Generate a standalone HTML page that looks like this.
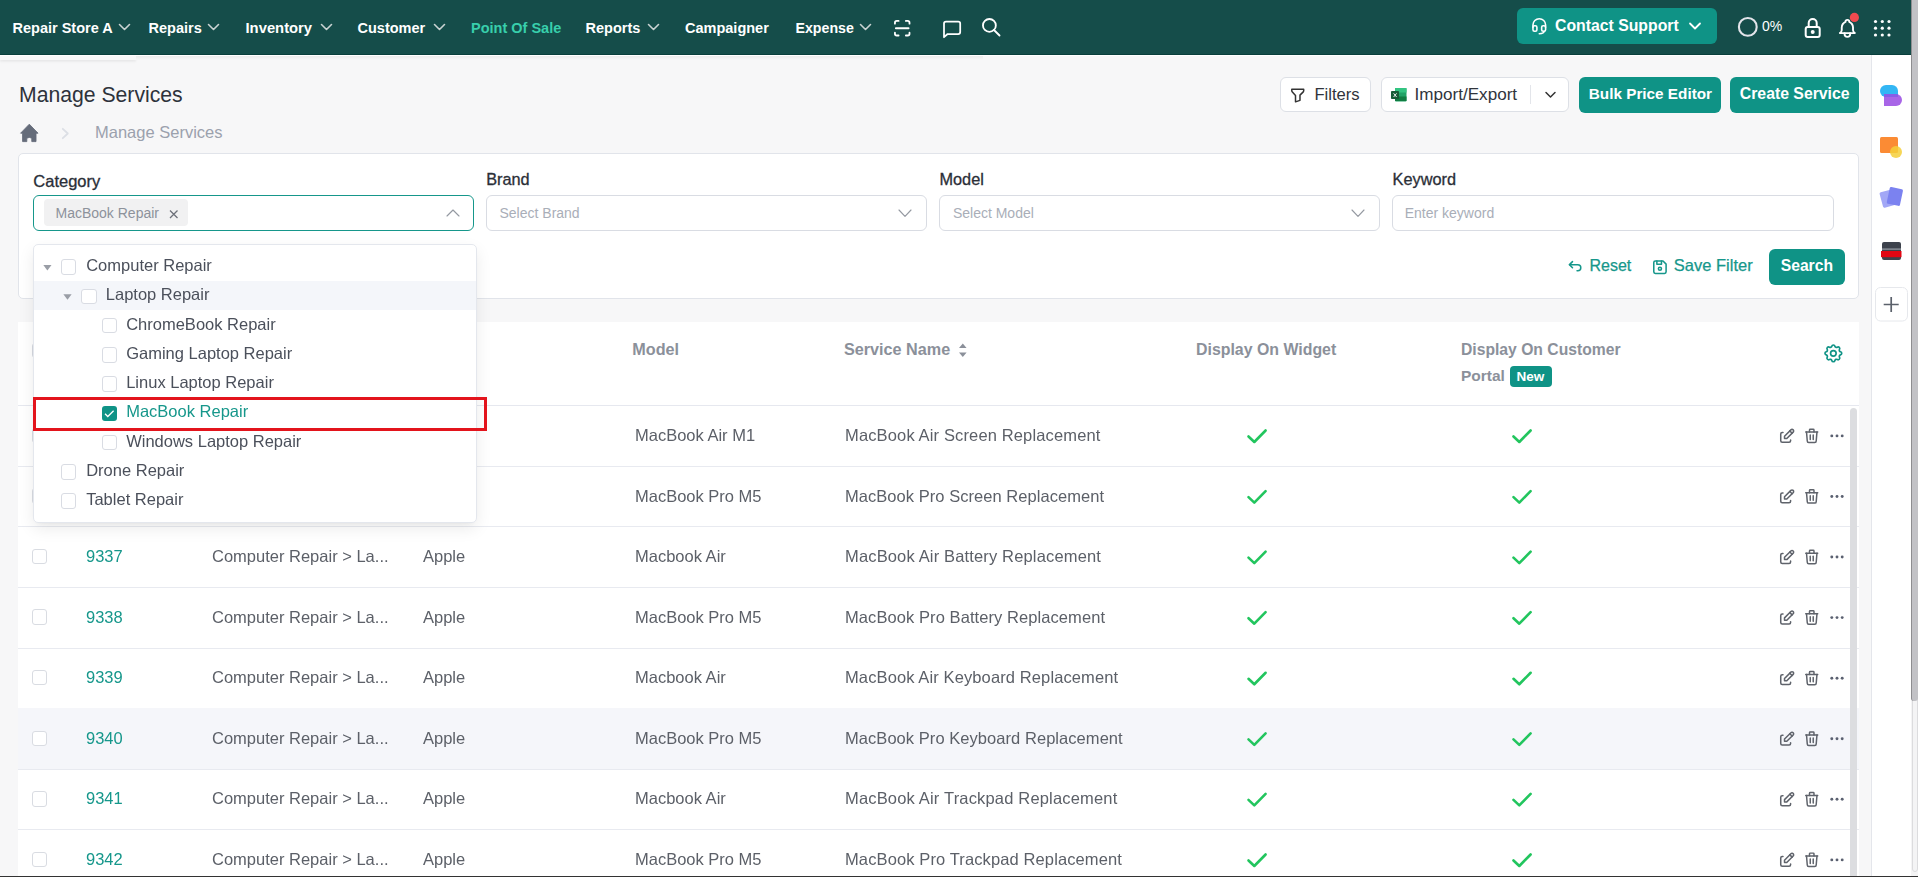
<!DOCTYPE html>
<html><head><meta charset="utf-8">
<style>
*{box-sizing:border-box;margin:0;padding:0}
html,body{width:1918px;height:877px;overflow:hidden;background:#f7f7f8;font-family:"Liberation Sans",sans-serif;-webkit-font-smoothing:antialiased}
.a{position:absolute}
.t{position:absolute;white-space:nowrap;line-height:1}
svg{position:absolute;overflow:visible}
#nav{position:absolute;left:0;top:0;width:1911px;height:55px;background:#154d4a;border-bottom:1px solid #093f3c}
.nv{color:#fff;font-weight:700;font-size:14.5px}
.th{font-size:16.2px;font-weight:700;color:#8b909a}
.td{font-size:16.5px;color:#5c6068;will-change:transform}
</style></head><body>
<!-- NAV -->
<div id="nav"></div>
<div class="t nv" style="left:12.5px;top:20.8px">Repair Store A</div>
<div class="t nv" style="left:148.5px;top:20.8px">Repairs</div>
<div class="t nv" style="left:245.5px;top:20.8px;font-size:14.8px">Inventory</div>
<div class="t nv" style="left:357.5px;top:20.8px">Customer</div>
<div class="t nv" style="left:471px;top:20.8px;color:#38cfac">Point Of Sale</div>
<div class="t nv" style="left:585.5px;top:20.8px">Reports</div>
<div class="t nv" style="left:685px;top:20.8px">Campaigner</div>
<div class="t nv" style="left:795.5px;top:20.8px;font-size:14.2px">Expense</div>
<svg style="left:0;top:0" width="1918" height="55">
 <g fill="none" stroke="#c9d3d2" stroke-width="1.6" stroke-linecap="round" stroke-linejoin="round">
  <path d="M119.5 24.5 L124.5 29.5 L129.5 24.5"/>
  <path d="M208.5 24.5 L213.5 29.5 L218.5 24.5"/>
  <path d="M321.5 24.5 L326.5 29.5 L331.5 24.5"/>
  <path d="M434.5 24.5 L439.5 29.5 L444.5 24.5"/>
  <path d="M648.5 24.5 L653.5 29.5 L658.5 24.5"/>
  <path d="M860.5 24.5 L865.5 29.5 L870.5 24.5"/>
 </g>
 <g fill="none" stroke="#fff" stroke-width="1.6" stroke-linecap="round" stroke-linejoin="round">
 </g>
<g transform="translate(891.30 17.30) scale(0.91)" fill="none" stroke="#fff" stroke-width="2" stroke-linecap="round" stroke-linejoin="round"><path d="M4 7v-1a2 2 0 0 1 2 -2h2"/><path d="M4 17v1a2 2 0 0 0 2 2h2"/><path d="M16 4h2a2 2 0 0 1 2 2v1"/><path d="M16 20h2a2 2 0 0 0 2 -2v-1"/><path d="M5 12l14 0"/></g>
 <g fill="none" stroke="#fff" stroke-width="1.6" stroke-linecap="round" stroke-linejoin="round">
  <!-- chat -->
  <path d="M944 37.2 V23.6 a2 2 0 0 1 2 -2 H958.2 a2 2 0 0 1 2 2 V32 a2 2 0 0 1 -2 2 H947.6 Z" stroke-width="1.75"/>
 </g>
<g transform="translate(980.20 16.20) scale(0.92)" fill="none" stroke="#fff" stroke-width="2" stroke-linecap="round" stroke-linejoin="round" ><path d="M10 10m-7 0a7 7 0 1 0 14 0a7 7 0 1 0 -14 0"/><path d="M21 21l-6 -6"/></g>
</svg>
<!-- contact support -->
<div class="a" style="left:1517px;top:8px;width:200px;height:36px;background:#0f9386;border-radius:6px"></div>
<svg style="left:1517px;top:8px" width="200" height="36">
 <g transform="translate(12.80 8.30) scale(0.79)" fill="none" stroke="#fff" stroke-width="2" stroke-linecap="round" stroke-linejoin="round"><path d="M4 14v-3a8 8 0 1 1 16 0v3"/><path d="M18 19c0 1.657 -2.686 3 -6 3"/><path d="M4 14a2 2 0 0 1 2 -2h1a2 2 0 0 1 2 2v3a2 2 0 0 1 -2 2h-1a2 2 0 0 1 -2 -2v-3z"/><path d="M15 14a2 2 0 0 1 2 -2h1a2 2 0 0 1 2 2v3a2 2 0 0 1 -2 2h-1a2 2 0 0 1 -2 -2v-3z"/></g>
 <path d="M173 15.5 L178 20.5 L183 15.5" fill="none" stroke="#fff" stroke-width="1.8" stroke-linecap="round" stroke-linejoin="round"/>
</svg>
<div class="t" style="left:1555px;top:18px;color:#fff;font-weight:700;font-size:15.8px">Contact Support</div>
<svg style="left:0;top:0" width="1918" height="55">
 <circle cx="1747.8" cy="26.9" r="8.9" fill="none" stroke="#e3e4ea" stroke-width="2.1"/>
<g transform="translate(1800.70 16.00) scale(1.0)" fill="none" stroke="#fff" stroke-width="2" stroke-linecap="round" stroke-linejoin="round"><path d="M5 13a2 2 0 0 1 2 -2h10a2 2 0 0 1 2 2v6a2 2 0 0 1 -2 2h-10a2 2 0 0 1 -2 -2v-6z"/><path d="M11 16a1 1 0 1 0 2 0a1 1 0 0 0 -2 0"/><path d="M8 11v-4a4 4 0 1 1 8 0v4"/></g><g transform="translate(1836.10 17.10) scale(0.94)" fill="none" stroke="#fff" stroke-width="2" stroke-linecap="round" stroke-linejoin="round"><path d="M10 5a2 2 0 1 1 4 0a7 7 0 0 1 4 6v3a4 4 0 0 0 2 3h-16a4 4 0 0 0 2 -3v-3a7 7 0 0 1 4 -6"/><path d="M9 17v1a3 3 0 0 0 6 0v-1"/></g>
 <circle cx="1854.4" cy="17.4" r="4.6" fill="#f04a4f"/>
 <g fill="#fff">
  <circle cx="1875.5" cy="21.5" r="1.6"/><circle cx="1882.3" cy="21.5" r="1.6"/><circle cx="1889" cy="21.5" r="1.6"/>
  <circle cx="1875.5" cy="28.2" r="1.6"/><circle cx="1882.3" cy="28.2" r="1.6"/><circle cx="1889" cy="28.2" r="1.6"/>
  <circle cx="1875.5" cy="35" r="1.6"/><circle cx="1882.3" cy="35" r="1.6"/><circle cx="1889" cy="35" r="1.6"/>
 </g>
</svg>
<div class="t" style="left:1762px;top:19px;color:#fff;font-size:14px">0%</div>

<!-- PAGE HEADER -->
<div class="a" style="left:0;top:55px;width:1911px;height:1px;background:#fff"></div>
<div class="a" style="left:0;top:56px;width:136px;height:4px;background:#f8f8f9;box-shadow:0 1.5px 2.5px rgba(0,0,0,0.07)"></div>
<div class="a" style="left:136px;top:56px;width:847px;height:4px;background:linear-gradient(#ebebeb,#f7f7f8)"></div>
<div class="t" style="left:19px;top:84.2px;font-size:21.2px;color:#2e323b">Manage Services</div>
<svg style="left:0;top:0" width="300" height="150">
 <path d="M29.3 124.2 L20.6 133.2 H22.6 V141.6 H26.8 V138.2 Q29.3 136.6 31.8 138.2 V141.6 H36 V133.2 H38 Z" fill="#656c7a" stroke="#656c7a" stroke-width="0.9" stroke-linejoin="round"/>
 <path d="M62.8 128.8 L67.8 133.5 L62.8 138.2" fill="none" stroke="#dcdfe5" stroke-width="1.8" stroke-linecap="round" stroke-linejoin="round"/>
</svg>
<div class="t" style="left:95px;top:124.2px;font-size:16.5px;color:#9ba1ad">Manage Services</div>

<!-- top buttons -->
<div class="a" style="left:1280px;top:77px;width:90.8px;height:35px;background:#fff;border:1px solid #dde0e6;border-radius:6px"></div>
<div class="a" style="left:1380.5px;top:77px;width:188.5px;height:35px;background:#fff;border:1px solid #dde0e6;border-radius:6px"></div>
<div class="a" style="left:1530px;top:85px;width:1px;height:19px;background:#e3e5ea"></div>
<svg style="left:0;top:0" width="1918" height="130">
 <g transform="translate(1288.80 86.20) scale(0.745)" fill="none" stroke="#333" stroke-width="2" stroke-linecap="round" stroke-linejoin="round"><path d="M4 4h16v2.172a2 2 0 0 1 -.586 1.414l-4.414 4.414v7l-6 2v-8.5l-4.48 -4.928a2 2 0 0 1 -.52 -1.345v-2.227z"/></g>
 <path d="M1546 92.5 L1550.5 97 L1555 92.5" fill="none" stroke="#333" stroke-width="1.5" stroke-linecap="round" stroke-linejoin="round"/>
 <!-- excel -->
 <rect x="1395" y="88" width="11.5" height="13.5" rx="1" fill="#21a366"/>
 <rect x="1395" y="88" width="11.5" height="4.5" fill="#33c481"/>
 <rect x="1395" y="96.5" width="11.5" height="4.5" fill="#107c41"/>
 <rect x="1391" y="91" width="8" height="8" rx="0.8" fill="#185c37"/>
 <path d="M1393.6 93.3 L1396.6 97 M1396.6 93.3 L1393.6 97" stroke="#fff" stroke-width="0.9"/>
</svg>
<div class="t" style="left:1314.4px;top:86.7px;font-size:16.6px;color:#30343c">Filters</div>
<div class="t" style="left:1414.5px;top:86.2px;font-size:17.1px;color:#30343c">Import/Export</div>
<div class="a" style="left:1579px;top:77px;width:142px;height:35.5px;background:#0f9386;border-radius:6px"></div>
<div class="a" style="left:1730px;top:77px;width:129px;height:35.5px;background:#0f9386;border-radius:6px"></div>
<div class="t" style="left:1588.8px;top:86.1px;font-size:15.3px;font-weight:700;color:#fff">Bulk Price Editor</div>
<div class="t" style="left:1739.8px;top:85.6px;font-size:15.8px;font-weight:700;color:#fff">Create Service</div>

<!-- FILTER CARD -->
<div class="a" style="left:18px;top:153px;width:1841px;height:146px;background:#fff;border:1px solid #e1e4ea;border-radius:5px"></div>
<div class="t" style="left:33.3px;top:173.4px;font-size:16.5px;color:#2a2e37;-webkit-text-stroke:0.3px #2a2e37">Category</div>
<div class="t" style="left:486.2px;top:171px;font-size:16.3px;color:#2a2e37;-webkit-text-stroke:0.3px #2a2e37">Brand</div>
<div class="t" style="left:939.5px;top:171px;font-size:16.3px;color:#2a2e37;-webkit-text-stroke:0.3px #2a2e37">Model</div>
<div class="t" style="left:1392.6px;top:171px;font-size:16.3px;color:#2a2e37;-webkit-text-stroke:0.3px #2a2e37">Keyword</div>
<div class="a" style="left:33px;top:195px;width:441px;height:36px;border:1.3px solid #16978b;border-radius:6px;background:#fff"></div>
<div class="a" style="left:44px;top:199px;width:144px;height:27px;background:#f1f1f2;border-radius:4px"></div>
<div class="t" style="left:55.5px;top:205.8px;font-size:14px;color:#8d929b">MacBook Repair</div>
<div class="a" style="left:486px;top:195px;width:441px;height:36px;border:1px solid #d9dce3;border-radius:6px;background:#fff"></div>
<div class="a" style="left:939px;top:195px;width:441px;height:36px;border:1px solid #d9dce3;border-radius:6px;background:#fff"></div>
<div class="a" style="left:1392px;top:195px;width:442px;height:36px;border:1px solid #d9dce3;border-radius:6px;background:#fff"></div>
<div class="t" style="left:499.5px;top:206px;font-size:14px;color:#a9aeb8">Select Brand</div>
<div class="t" style="left:952.9px;top:206px;font-size:14px;color:#a9aeb8">Select Model</div>
<div class="t" style="left:1404.7px;top:206px;font-size:14px;color:#a9aeb8">Enter keyword</div>
<svg style="left:0;top:0" width="1918" height="300">
 <path d="M170 210.5 L177.5 218 M177.5 210.5 L170 218" stroke="#6d717a" stroke-width="1.3"/>
 <g fill="none" stroke="#9499a1" stroke-width="1.15" stroke-linecap="round" stroke-linejoin="round">
  <path d="M447 216 L453 210 L459 216"/>
  <path d="M899 210 L905 216.3 L911 210"/>
  <path d="M1352 210 L1358 216.3 L1364 210"/>
 </g>
 <g fill="none" stroke="#16978b" stroke-width="1.6" stroke-linecap="round" stroke-linejoin="round">
 </g>
<g transform="translate(1565.70 257.10) scale(0.755)" fill="none" stroke="#16978b" stroke-width="2" stroke-linecap="round" stroke-linejoin="round"><path d="M9 14l-4 -4l4 -4"/><path d="M5 10h11a4 4 0 1 1 0 8h-1"/></g><g transform="translate(1650.70 258.00) scale(0.77)" fill="none" stroke="#16978b" stroke-width="2" stroke-linecap="round" stroke-linejoin="round"><path d="M6 4h10l4 4v10a2 2 0 0 1 -2 2h-12a2 2 0 0 1 -2 -2v-12a2 2 0 0 1 2 -2"/><path d="M12 14m-2 0a2 2 0 1 0 4 0a2 2 0 1 0 -4 0"/><path d="M14 4l0 4l-6 0l0 -4"/></g>
</svg>
<div class="t" style="left:1589.5px;top:257.5px;font-size:16px;color:#16978b;-webkit-text-stroke:0.25px #16978b">Reset</div>
<div class="t" style="left:1673.8px;top:257px;font-size:16.5px;color:#16978b;-webkit-text-stroke:0.25px #16978b">Save Filter</div>
<div class="a" style="left:1769px;top:249px;width:76px;height:36px;background:#0f9386;border-radius:6px"></div>
<div class="t" style="left:1780.7px;top:258px;font-size:15.7px;font-weight:700;color:#fff">Search</div>

<!-- TABLE -->
<div class="a" style="left:18px;top:322px;width:1841px;height:560px;background:#fff"></div>
<div class="a" style="left:32px;top:342.5px;width:15px;height:15px;border:1px solid #d6d9e0;border-radius:3px;background:#fff"></div>
<div class="t th" style="left:86px;top:341.4px">ID</div>
<div class="t th" style="left:212px;top:341.4px">Category</div>
<div class="t th" style="left:423px;top:341.4px">Brand</div>
<div class="t th" style="left:632.3px;top:341.4px">Model</div>
<div class="t th" style="left:844px;top:341.4px">Service Name</div>
<div class="t th" style="left:1196px;top:341.9px;font-size:15.9px">Display On Widget</div>
<div class="t th" style="left:1461px;top:342.3px;font-size:15.7px">Display On Customer</div>
<div class="t th" style="left:1461px;top:367.7px;font-size:15.5px">Portal</div>
<div class="a" style="left:1510px;top:366px;width:42px;height:21px;background:#0f9386;border-radius:4px"></div>
<div class="t" style="left:1516.5px;top:370.2px;font-size:13.5px;font-weight:700;color:#fff">New</div>
<div class="a" style="left:18px;top:404.5px;width:1841px;height:1px;background:#e6e8ef"></div>
<div class="a" style="left:18px;top:466px;width:1841px;height:1px;background:#e8eaf0"></div>
<div class="a" style="left:32px;top:427.70px;width:15px;height:15.5px;border:1px solid #d9dce2;border-radius:3px;background:#fff"></div>
<div class="t td" style="left:86px;top:427.03px;color:#16978b">9335</div>
<div class="t td" style="left:212px;top:427.03px">Computer Repair &gt; La...</div>
<div class="t td" style="left:423px;top:427.03px">Apple</div>
<div class="t td" style="left:634.5px;top:427.03px">MacBook Air M1</div>
<div class="t td" style="left:844.9px;top:427.03px;letter-spacing:0.141px">MacBook Air Screen Replacement</div>
<div class="a" style="left:18px;top:526px;width:1841px;height:1px;background:#e8eaf0"></div>
<div class="a" style="left:32px;top:488.27px;width:15px;height:15.5px;border:1px solid #d9dce2;border-radius:3px;background:#fff"></div>
<div class="t td" style="left:86px;top:487.60px;color:#16978b">9336</div>
<div class="t td" style="left:212px;top:487.60px">Computer Repair &gt; La...</div>
<div class="t td" style="left:423px;top:487.60px">Apple</div>
<div class="t td" style="left:634.5px;top:487.60px">MacBook Pro M5</div>
<div class="t td" style="left:844.9px;top:487.60px;letter-spacing:0.045px">MacBook Pro Screen Replacement</div>
<div class="a" style="left:18px;top:587px;width:1841px;height:1px;background:#e8eaf0"></div>
<div class="a" style="left:32px;top:548.84px;width:15px;height:15.5px;border:1px solid #d9dce2;border-radius:3px;background:#fff"></div>
<div class="t td" style="left:86px;top:548.17px;color:#16978b">9337</div>
<div class="t td" style="left:212px;top:548.17px">Computer Repair &gt; La...</div>
<div class="t td" style="left:423px;top:548.17px">Apple</div>
<div class="t td" style="left:634.5px;top:548.17px">Macbook Air</div>
<div class="t td" style="left:844.9px;top:548.17px;letter-spacing:0.153px">MacBook Air Battery Replacement</div>
<div class="a" style="left:18px;top:648px;width:1841px;height:1px;background:#e8eaf0"></div>
<div class="a" style="left:32px;top:609.41px;width:15px;height:15.5px;border:1px solid #d9dce2;border-radius:3px;background:#fff"></div>
<div class="t td" style="left:86px;top:608.74px;color:#16978b">9338</div>
<div class="t td" style="left:212px;top:608.74px">Computer Repair &gt; La...</div>
<div class="t td" style="left:423px;top:608.74px">Apple</div>
<div class="t td" style="left:634.5px;top:608.74px">MacBook Pro M5</div>
<div class="t td" style="left:844.9px;top:608.74px;letter-spacing:0.077px">MacBook Pro Battery Replacement</div>
<div class="a" style="left:18px;top:708px;width:1841px;height:1px;background:#e8eaf0"></div>
<div class="a" style="left:32px;top:669.98px;width:15px;height:15.5px;border:1px solid #d9dce2;border-radius:3px;background:#fff"></div>
<div class="t td" style="left:86px;top:669.31px;color:#16978b">9339</div>
<div class="t td" style="left:212px;top:669.31px">Computer Repair &gt; La...</div>
<div class="t td" style="left:423px;top:669.31px">Apple</div>
<div class="t td" style="left:634.5px;top:669.31px">Macbook Air</div>
<div class="t td" style="left:844.9px;top:669.31px;letter-spacing:0.113px">MacBook Air Keyboard Replacement</div>
<div class="a" style="left:18px;top:708px;width:1841px;height:61px;background:#f5f6fa"></div>
<div class="a" style="left:18px;top:769px;width:1841px;height:1px;background:#e8eaf0"></div>
<div class="a" style="left:32px;top:730.55px;width:15px;height:15.5px;border:1px solid #d9dce2;border-radius:3px;background:#fff"></div>
<div class="t td" style="left:86px;top:729.88px;color:#16978b">9340</div>
<div class="t td" style="left:212px;top:729.88px">Computer Repair &gt; La...</div>
<div class="t td" style="left:423px;top:729.88px">Apple</div>
<div class="t td" style="left:634.5px;top:729.88px">MacBook Pro M5</div>
<div class="t td" style="left:844.9px;top:729.88px;letter-spacing:0.052px">MacBook Pro Keyboard Replacement</div>
<div class="a" style="left:18px;top:829px;width:1841px;height:1px;background:#e8eaf0"></div>
<div class="a" style="left:32px;top:791.12px;width:15px;height:15.5px;border:1px solid #d9dce2;border-radius:3px;background:#fff"></div>
<div class="t td" style="left:86px;top:790.45px;color:#16978b">9341</div>
<div class="t td" style="left:212px;top:790.45px">Computer Repair &gt; La...</div>
<div class="t td" style="left:423px;top:790.45px">Apple</div>
<div class="t td" style="left:634.5px;top:790.45px">Macbook Air</div>
<div class="t td" style="left:844.9px;top:790.45px;letter-spacing:0.174px">MacBook Air Trackpad Replacement</div>
<div class="a" style="left:18px;top:890px;width:1841px;height:1px;background:#e8eaf0"></div>
<div class="a" style="left:32px;top:851.69px;width:15px;height:15.5px;border:1px solid #d9dce2;border-radius:3px;background:#fff"></div>
<div class="t td" style="left:86px;top:851.02px;color:#16978b">9342</div>
<div class="t td" style="left:212px;top:851.02px">Computer Repair &gt; La...</div>
<div class="t td" style="left:423px;top:851.02px">Apple</div>
<div class="t td" style="left:634.5px;top:851.02px">MacBook Pro M5</div>
<div class="t td" style="left:844.9px;top:851.02px;letter-spacing:0.116px">MacBook Pro Trackpad Replacement</div>
<svg style="left:0;top:0" width="1918" height="877">
<path d="M962.8 343.5 L959 348 H966.6 Z M962.8 357 L959 352.5 H966.6 Z" fill="#8b909a"/>
<g transform="translate(1833.35 353.35) scale(0.93) translate(-12 -12)" fill="none" stroke="#0f9386" stroke-width="1.8" stroke-linecap="round" stroke-linejoin="round"><path d="M10.325 4.317c.426 -1.756 2.924 -1.756 3.35 0a1.724 1.724 0 0 0 2.573 1.066c1.543 -.94 3.31 .826 2.37 2.37a1.724 1.724 0 0 0 1.065 2.572c1.756 .426 1.756 2.924 0 3.35a1.724 1.724 0 0 0 -1.066 2.573c.94 1.543 -.826 3.31 -2.37 2.37a1.724 1.724 0 0 0 -2.572 1.065c-.426 1.756 -2.924 1.756 -3.35 0a1.724 1.724 0 0 0 -2.573 -1.066c-1.543 .94 -3.31 -.826 -2.37 -2.37a1.724 1.724 0 0 0 -1.065 -2.572c-1.756 -.426 -1.756 -2.924 0 -3.35a1.724 1.724 0 0 0 1.066 -2.573c-.94 -1.543 .826 -3.31 2.37 -2.37c1 .608 2.296 .07 2.572 -1.065z"/><circle cx="12" cy="12" r="3"/></g>
<path d="M1248.5 436.50 L1254.3 442.00 L1265.6 430.50" fill="none" stroke="#22c55e" stroke-width="2.6" stroke-linecap="round" stroke-linejoin="round"/>
<path d="M1513.5 436.50 L1519.3 442.00 L1530.6 430.50" fill="none" stroke="#22c55e" stroke-width="2.6" stroke-linecap="round" stroke-linejoin="round"/>
<g transform="translate(1777.70 427.10) scale(0.758)" fill="none" stroke="#5f636b" stroke-width="2" stroke-linecap="round" stroke-linejoin="round"><path d="M7 7h-1a2 2 0 0 0 -2 2v9a2 2 0 0 0 2 2h9a2 2 0 0 0 2 -2v-1"/><path d="M20.385 6.585a2.1 2.1 0 0 0 -2.97 -2.97l-8.415 8.385v3h3l8.385 -8.415z"/><path d="M16 5l3 3"/></g><g transform="translate(1802.80 426.90) scale(0.745)" fill="none" stroke="#5f636b" stroke-width="2" stroke-linecap="round" stroke-linejoin="round"><path d="M4 7l16 0"/><path d="M10 11l0 6"/><path d="M14 11l0 6"/><path d="M5 7l1 12a2 2 0 0 0 2 2h8a2 2 0 0 0 2 -2l1 -12"/><path d="M9 7v-3a1 1 0 0 1 1 -1h4a1 1 0 0 1 1 1v3"/></g>
<circle cx="1831.8" cy="435.90" r="1.45" fill="#5a6070"/>
<circle cx="1837" cy="435.90" r="1.45" fill="#5a6070"/>
<circle cx="1842.2" cy="435.90" r="1.45" fill="#5a6070"/>
<path d="M1248.5 497.07 L1254.3 502.57 L1265.6 491.07" fill="none" stroke="#22c55e" stroke-width="2.6" stroke-linecap="round" stroke-linejoin="round"/>
<path d="M1513.5 497.07 L1519.3 502.57 L1530.6 491.07" fill="none" stroke="#22c55e" stroke-width="2.6" stroke-linecap="round" stroke-linejoin="round"/>
<g transform="translate(1777.70 487.67) scale(0.758)" fill="none" stroke="#5f636b" stroke-width="2" stroke-linecap="round" stroke-linejoin="round"><path d="M7 7h-1a2 2 0 0 0 -2 2v9a2 2 0 0 0 2 2h9a2 2 0 0 0 2 -2v-1"/><path d="M20.385 6.585a2.1 2.1 0 0 0 -2.97 -2.97l-8.415 8.385v3h3l8.385 -8.415z"/><path d="M16 5l3 3"/></g><g transform="translate(1802.80 487.47) scale(0.745)" fill="none" stroke="#5f636b" stroke-width="2" stroke-linecap="round" stroke-linejoin="round"><path d="M4 7l16 0"/><path d="M10 11l0 6"/><path d="M14 11l0 6"/><path d="M5 7l1 12a2 2 0 0 0 2 2h8a2 2 0 0 0 2 -2l1 -12"/><path d="M9 7v-3a1 1 0 0 1 1 -1h4a1 1 0 0 1 1 1v3"/></g>
<circle cx="1831.8" cy="496.47" r="1.45" fill="#5a6070"/>
<circle cx="1837" cy="496.47" r="1.45" fill="#5a6070"/>
<circle cx="1842.2" cy="496.47" r="1.45" fill="#5a6070"/>
<path d="M1248.5 557.64 L1254.3 563.14 L1265.6 551.64" fill="none" stroke="#22c55e" stroke-width="2.6" stroke-linecap="round" stroke-linejoin="round"/>
<path d="M1513.5 557.64 L1519.3 563.14 L1530.6 551.64" fill="none" stroke="#22c55e" stroke-width="2.6" stroke-linecap="round" stroke-linejoin="round"/>
<g transform="translate(1777.70 548.24) scale(0.758)" fill="none" stroke="#5f636b" stroke-width="2" stroke-linecap="round" stroke-linejoin="round"><path d="M7 7h-1a2 2 0 0 0 -2 2v9a2 2 0 0 0 2 2h9a2 2 0 0 0 2 -2v-1"/><path d="M20.385 6.585a2.1 2.1 0 0 0 -2.97 -2.97l-8.415 8.385v3h3l8.385 -8.415z"/><path d="M16 5l3 3"/></g><g transform="translate(1802.80 548.04) scale(0.745)" fill="none" stroke="#5f636b" stroke-width="2" stroke-linecap="round" stroke-linejoin="round"><path d="M4 7l16 0"/><path d="M10 11l0 6"/><path d="M14 11l0 6"/><path d="M5 7l1 12a2 2 0 0 0 2 2h8a2 2 0 0 0 2 -2l1 -12"/><path d="M9 7v-3a1 1 0 0 1 1 -1h4a1 1 0 0 1 1 1v3"/></g>
<circle cx="1831.8" cy="557.04" r="1.45" fill="#5a6070"/>
<circle cx="1837" cy="557.04" r="1.45" fill="#5a6070"/>
<circle cx="1842.2" cy="557.04" r="1.45" fill="#5a6070"/>
<path d="M1248.5 618.21 L1254.3 623.71 L1265.6 612.21" fill="none" stroke="#22c55e" stroke-width="2.6" stroke-linecap="round" stroke-linejoin="round"/>
<path d="M1513.5 618.21 L1519.3 623.71 L1530.6 612.21" fill="none" stroke="#22c55e" stroke-width="2.6" stroke-linecap="round" stroke-linejoin="round"/>
<g transform="translate(1777.70 608.81) scale(0.758)" fill="none" stroke="#5f636b" stroke-width="2" stroke-linecap="round" stroke-linejoin="round"><path d="M7 7h-1a2 2 0 0 0 -2 2v9a2 2 0 0 0 2 2h9a2 2 0 0 0 2 -2v-1"/><path d="M20.385 6.585a2.1 2.1 0 0 0 -2.97 -2.97l-8.415 8.385v3h3l8.385 -8.415z"/><path d="M16 5l3 3"/></g><g transform="translate(1802.80 608.61) scale(0.745)" fill="none" stroke="#5f636b" stroke-width="2" stroke-linecap="round" stroke-linejoin="round"><path d="M4 7l16 0"/><path d="M10 11l0 6"/><path d="M14 11l0 6"/><path d="M5 7l1 12a2 2 0 0 0 2 2h8a2 2 0 0 0 2 -2l1 -12"/><path d="M9 7v-3a1 1 0 0 1 1 -1h4a1 1 0 0 1 1 1v3"/></g>
<circle cx="1831.8" cy="617.61" r="1.45" fill="#5a6070"/>
<circle cx="1837" cy="617.61" r="1.45" fill="#5a6070"/>
<circle cx="1842.2" cy="617.61" r="1.45" fill="#5a6070"/>
<path d="M1248.5 678.78 L1254.3 684.28 L1265.6 672.78" fill="none" stroke="#22c55e" stroke-width="2.6" stroke-linecap="round" stroke-linejoin="round"/>
<path d="M1513.5 678.78 L1519.3 684.28 L1530.6 672.78" fill="none" stroke="#22c55e" stroke-width="2.6" stroke-linecap="round" stroke-linejoin="round"/>
<g transform="translate(1777.70 669.38) scale(0.758)" fill="none" stroke="#5f636b" stroke-width="2" stroke-linecap="round" stroke-linejoin="round"><path d="M7 7h-1a2 2 0 0 0 -2 2v9a2 2 0 0 0 2 2h9a2 2 0 0 0 2 -2v-1"/><path d="M20.385 6.585a2.1 2.1 0 0 0 -2.97 -2.97l-8.415 8.385v3h3l8.385 -8.415z"/><path d="M16 5l3 3"/></g><g transform="translate(1802.80 669.18) scale(0.745)" fill="none" stroke="#5f636b" stroke-width="2" stroke-linecap="round" stroke-linejoin="round"><path d="M4 7l16 0"/><path d="M10 11l0 6"/><path d="M14 11l0 6"/><path d="M5 7l1 12a2 2 0 0 0 2 2h8a2 2 0 0 0 2 -2l1 -12"/><path d="M9 7v-3a1 1 0 0 1 1 -1h4a1 1 0 0 1 1 1v3"/></g>
<circle cx="1831.8" cy="678.18" r="1.45" fill="#5a6070"/>
<circle cx="1837" cy="678.18" r="1.45" fill="#5a6070"/>
<circle cx="1842.2" cy="678.18" r="1.45" fill="#5a6070"/>
<path d="M1248.5 739.35 L1254.3 744.85 L1265.6 733.35" fill="none" stroke="#22c55e" stroke-width="2.6" stroke-linecap="round" stroke-linejoin="round"/>
<path d="M1513.5 739.35 L1519.3 744.85 L1530.6 733.35" fill="none" stroke="#22c55e" stroke-width="2.6" stroke-linecap="round" stroke-linejoin="round"/>
<g transform="translate(1777.70 729.95) scale(0.758)" fill="none" stroke="#5f636b" stroke-width="2" stroke-linecap="round" stroke-linejoin="round"><path d="M7 7h-1a2 2 0 0 0 -2 2v9a2 2 0 0 0 2 2h9a2 2 0 0 0 2 -2v-1"/><path d="M20.385 6.585a2.1 2.1 0 0 0 -2.97 -2.97l-8.415 8.385v3h3l8.385 -8.415z"/><path d="M16 5l3 3"/></g><g transform="translate(1802.80 729.75) scale(0.745)" fill="none" stroke="#5f636b" stroke-width="2" stroke-linecap="round" stroke-linejoin="round"><path d="M4 7l16 0"/><path d="M10 11l0 6"/><path d="M14 11l0 6"/><path d="M5 7l1 12a2 2 0 0 0 2 2h8a2 2 0 0 0 2 -2l1 -12"/><path d="M9 7v-3a1 1 0 0 1 1 -1h4a1 1 0 0 1 1 1v3"/></g>
<circle cx="1831.8" cy="738.75" r="1.45" fill="#5a6070"/>
<circle cx="1837" cy="738.75" r="1.45" fill="#5a6070"/>
<circle cx="1842.2" cy="738.75" r="1.45" fill="#5a6070"/>
<path d="M1248.5 799.92 L1254.3 805.42 L1265.6 793.92" fill="none" stroke="#22c55e" stroke-width="2.6" stroke-linecap="round" stroke-linejoin="round"/>
<path d="M1513.5 799.92 L1519.3 805.42 L1530.6 793.92" fill="none" stroke="#22c55e" stroke-width="2.6" stroke-linecap="round" stroke-linejoin="round"/>
<g transform="translate(1777.70 790.52) scale(0.758)" fill="none" stroke="#5f636b" stroke-width="2" stroke-linecap="round" stroke-linejoin="round"><path d="M7 7h-1a2 2 0 0 0 -2 2v9a2 2 0 0 0 2 2h9a2 2 0 0 0 2 -2v-1"/><path d="M20.385 6.585a2.1 2.1 0 0 0 -2.97 -2.97l-8.415 8.385v3h3l8.385 -8.415z"/><path d="M16 5l3 3"/></g><g transform="translate(1802.80 790.32) scale(0.745)" fill="none" stroke="#5f636b" stroke-width="2" stroke-linecap="round" stroke-linejoin="round"><path d="M4 7l16 0"/><path d="M10 11l0 6"/><path d="M14 11l0 6"/><path d="M5 7l1 12a2 2 0 0 0 2 2h8a2 2 0 0 0 2 -2l1 -12"/><path d="M9 7v-3a1 1 0 0 1 1 -1h4a1 1 0 0 1 1 1v3"/></g>
<circle cx="1831.8" cy="799.32" r="1.45" fill="#5a6070"/>
<circle cx="1837" cy="799.32" r="1.45" fill="#5a6070"/>
<circle cx="1842.2" cy="799.32" r="1.45" fill="#5a6070"/>
<path d="M1248.5 860.49 L1254.3 865.99 L1265.6 854.49" fill="none" stroke="#22c55e" stroke-width="2.6" stroke-linecap="round" stroke-linejoin="round"/>
<path d="M1513.5 860.49 L1519.3 865.99 L1530.6 854.49" fill="none" stroke="#22c55e" stroke-width="2.6" stroke-linecap="round" stroke-linejoin="round"/>
<g transform="translate(1777.70 851.09) scale(0.758)" fill="none" stroke="#5f636b" stroke-width="2" stroke-linecap="round" stroke-linejoin="round"><path d="M7 7h-1a2 2 0 0 0 -2 2v9a2 2 0 0 0 2 2h9a2 2 0 0 0 2 -2v-1"/><path d="M20.385 6.585a2.1 2.1 0 0 0 -2.97 -2.97l-8.415 8.385v3h3l8.385 -8.415z"/><path d="M16 5l3 3"/></g><g transform="translate(1802.80 850.89) scale(0.745)" fill="none" stroke="#5f636b" stroke-width="2" stroke-linecap="round" stroke-linejoin="round"><path d="M4 7l16 0"/><path d="M10 11l0 6"/><path d="M14 11l0 6"/><path d="M5 7l1 12a2 2 0 0 0 2 2h8a2 2 0 0 0 2 -2l1 -12"/><path d="M9 7v-3a1 1 0 0 1 1 -1h4a1 1 0 0 1 1 1v3"/></g>
<circle cx="1831.8" cy="859.89" r="1.45" fill="#5a6070"/>
<circle cx="1837" cy="859.89" r="1.45" fill="#5a6070"/>
<circle cx="1842.2" cy="859.89" r="1.45" fill="#5a6070"/>
</svg>
<div class="a" style="left:1850px;top:408px;width:7px;height:480px;background:#dcdde0;border-radius:3.5px"></div>
<!-- DROPDOWN -->
<div class="a" style="left:33px;top:244px;width:443.5px;height:278.5px;background:#fff;border:1px solid #e4e7ed;border-radius:5px;box-shadow:0 6px 16px rgba(0,0,0,0.08),0 3px 6px -4px rgba(0,0,0,0.1)"></div>
<div class="a" style="left:34px;top:280.7px;width:441.5px;height:29px;background:#f4f6fa"></div>
<div class="a" style="left:61.0px;top:259.30px;width:15.3px;height:15.5px;border:1px solid #d9dce3;border-radius:3px;background:#fff"></div>
<div class="t" style="left:86.2px;top:257.03px;font-size:16.5px;color:#4b505b">Computer Repair</div>
<div class="a" style="left:81.4px;top:288.55px;width:15.3px;height:15.5px;border:1px solid #d9dce3;border-radius:3px;background:#fff"></div>
<div class="t" style="left:105.8px;top:286.28px;font-size:16.5px;color:#4b505b">Laptop Repair</div>
<div class="a" style="left:101.8px;top:317.80px;width:15.3px;height:15.5px;border:1px solid #d9dce3;border-radius:3px;background:#fff"></div>
<div class="t" style="left:126.2px;top:315.53px;font-size:16.5px;color:#4b505b">ChromeBook Repair</div>
<div class="a" style="left:101.8px;top:347.05px;width:15.3px;height:15.5px;border:1px solid #d9dce3;border-radius:3px;background:#fff"></div>
<div class="t" style="left:126.2px;top:344.78px;font-size:16.5px;color:#4b505b">Gaming Laptop Repair</div>
<div class="a" style="left:101.8px;top:376.30px;width:15.3px;height:15.5px;border:1px solid #d9dce3;border-radius:3px;background:#fff"></div>
<div class="t" style="left:126.2px;top:374.03px;font-size:16.5px;color:#4b505b">Linux Laptop Repair</div>
<div class="a" style="left:101.8px;top:405.55px;width:15.3px;height:15.5px;background:#0f9386;border-radius:3px"></div>
<div class="t" style="left:126.2px;top:403.28px;font-size:16.5px;color:#16978b">MacBook Repair</div>
<div class="a" style="left:101.8px;top:434.80px;width:15.3px;height:15.5px;border:1px solid #d9dce3;border-radius:3px;background:#fff"></div>
<div class="t" style="left:126.2px;top:432.53px;font-size:16.5px;color:#4b505b">Windows Laptop Repair</div>
<div class="a" style="left:61.0px;top:464.05px;width:15.3px;height:15.5px;border:1px solid #d9dce3;border-radius:3px;background:#fff"></div>
<div class="t" style="left:86.2px;top:461.78px;font-size:16.5px;color:#4b505b">Drone Repair</div>
<div class="a" style="left:61.0px;top:493.30px;width:15.3px;height:15.5px;border:1px solid #d9dce3;border-radius:3px;background:#fff"></div>
<div class="t" style="left:86.2px;top:491.03px;font-size:16.5px;color:#4b505b">Tablet Repair</div>
<svg style="left:0;top:0" width="500" height="530">
<path d="M43.3 264.90 H51.5 L47.4 270.50 Z" fill="#9a9ea6"/>
<path d="M63.4 294.15 H71.6 L67.5 299.75 Z" fill="#9a9ea6"/>
<path d="M105.0 413.75 L107.8 416.55 L113.6 410.75" fill="none" stroke="#fff" stroke-width="1.3"/>
</svg>
<div class="a" style="left:33px;top:397px;width:454px;height:34px;border:3px solid #e3141c"></div>
<!-- browser scrollbar -->
<div class="a" style="left:1911px;top:0;width:7px;height:877px;background:#f4f4f5"></div>
<div class="a" style="left:1911.5px;top:680px;width:6.5px;height:192px;border:1px solid #dcdcde;border-radius:0 0 4px 4px"></div>
<div class="a" style="left:1911px;top:0;width:7px;height:701px;background:#c2c2c6;border-left:1px solid #8d8d90;border-radius:0 0 3px 3px"></div>

<!-- right sidebar -->
<div class="a" style="left:1871px;top:55px;width:40px;height:822px;background:#fff;border-left:1px solid #e4e6eb"></div>

<svg style="left:0;top:0" width="1918" height="877">
 <!-- chat bubbles -->
 <path d="M1886 85 H1892 a6 6 0 0 1 6 6 V97 H1886 a6 6 0 0 1 0 -12 Z" fill="#33b6f4"/>
 <path d="M1884 94 H1896 a6 6 0 0 1 0 12 H1884 Z" fill="#a35de6" opacity="0.95"/>
 <path d="M1884 94 H1898 V97 H1884 Z" fill="#7a5ae8" opacity="0.6"/>
 <!-- orange square -->
 <rect x="1880" y="137" width="18" height="16" rx="1.5" fill="#fb8b34"/>
 <circle cx="1896" cy="152" r="6" fill="#f5cf3a" opacity="0.85"/>
 <!-- blue cards -->
 <g transform="rotate(-15 1890 198)"><rect x="1881" y="190" width="13" height="16" rx="1.5" fill="#a2a7f6"/></g>
 <g transform="rotate(12 1895 197)"><rect x="1888" y="188" width="13.5" height="17" rx="1.5" fill="#7b82f0"/></g>
 <!-- dark red icon -->
 <rect x="1882" y="242" width="19" height="18" rx="2" fill="#3d424c"/>
 <rect x="1882" y="248.5" width="19" height="1.2" fill="#9aa0a8"/>
 <rect x="1881" y="251" width="20.5" height="6.2" fill="#e30613"/>
 <!-- plus box -->
 <rect x="1875.5" y="287.5" width="32" height="33.5" rx="5" fill="#fff" stroke="#e6e8ec" stroke-width="1"/>
 <path d="M1891.2 297 V312 M1883.7 304.5 H1898.7" stroke="#5b616b" stroke-width="1.7"/>
</svg>
<div class="a" style="left:0;top:876px;width:1918px;height:1px;background:#333"></div>
</body></html>
